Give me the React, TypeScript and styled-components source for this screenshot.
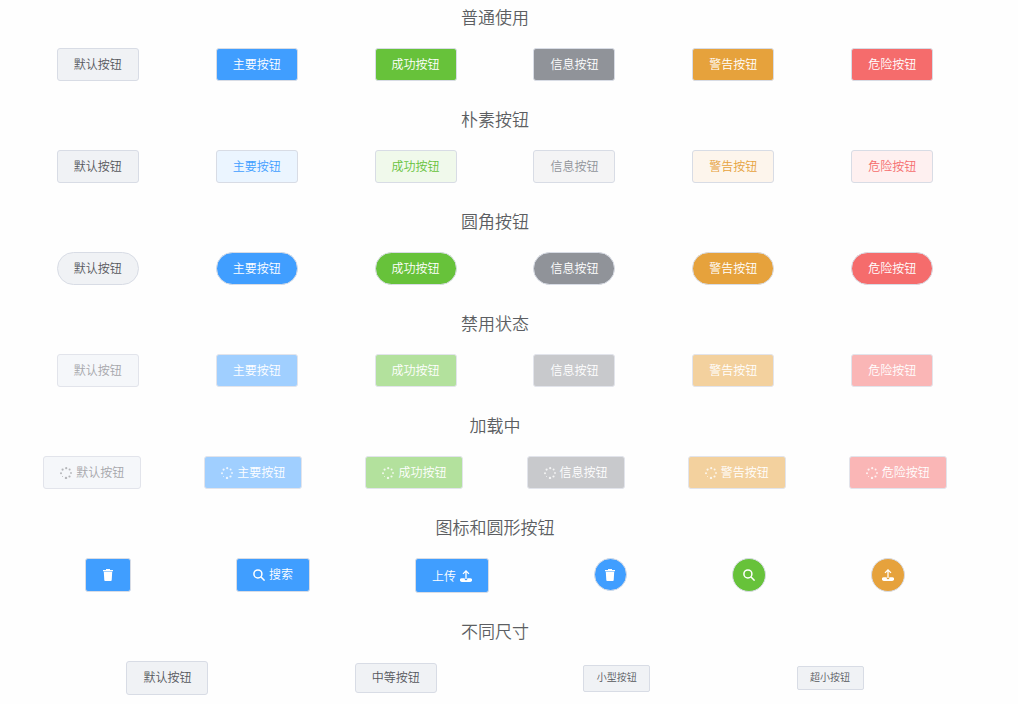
import React from 'react';
import styled, { createGlobalStyle, css } from 'styled-components';

const GlobalStyle = createGlobalStyle`
  *, *::before, *::after { box-sizing: border-box; }
  body {
    margin: 0;
    background: #fefefe;
    color: #5c5e62;
    font-family: 'Noto Sans CJK SC', sans-serif;
    font-weight: 350;
  }
`;

type Kind = 'default' | 'primary' | 'success' | 'info' | 'warning' | 'danger';
type Size = 'large' | 'tall' | 'normal' | 'medium' | 'small' | 'mini';

const solid: Record<Kind, string> = {
  default: '#f0f2f5',
  primary: '#409eff',
  success: '#67c23a',
  info: '#909399',
  warning: '#e6a23c',
  danger: '#f56c6c',
};

const pale: Record<Kind, string> = {
  default: '#f0f2f5',
  primary: '#ebf5ff',
  success: '#f0f9eb',
  info: '#f4f4f5',
  warning: '#fdf5ec',
  danger: '#fef0f0',
};

const faded: Record<Kind, string> = {
  default: '#f5f7fa',
  primary: '#a0cfff',
  success: '#b3e19d',
  info: '#c8c9cc',
  warning: '#f3d19e',
  danger: '#fab6b6',
};

const heights: Record<Size, number> = {
  large: 35,
  tall: 34,
  normal: 33,
  medium: 30,
  small: 27,
  mini: 24,
};

const Page = styled.main`
  margin: 0 8px 0 -20px;
  overflow: hidden;
`;

const Section = styled.section`
  padding-bottom: 21px;
`;

const Title = styled.h2`
  margin: 0;
  font-size: 17px;
  font-weight: inherit;
  line-height: 34px;
  text-align: center;
`;

const Row = styled.div<{ $top?: number; $height?: number; $align?: string }>`
  display: flex;
  justify-content: space-evenly;
  align-items: ${(p) => p.$align ?? 'center'};
  min-height: ${(p) => p.$height ?? 33}px;
  margin-top: ${(p) => p.$top ?? 14}px;
`;

const Button = styled.button<{
  $kind?: Kind;
  $size?: Size;
  $plain?: boolean;
  $round?: boolean;
  $circle?: boolean;
}>`
  display: inline-flex;
  align-items: center;
  justify-content: center;
  gap: 4px;
  height: ${(p) => heights[p.$size ?? 'normal']}px;
  padding: 0 16px;
  border: 1px solid #d8dce5;
  border-radius: ${(p) => (p.$round ? 17 : 3)}px;
  background: ${(p) => (p.$plain ? pale : solid)[p.$kind ?? 'default']};
  color: ${(p) => {
    const kind = p.$kind ?? 'default';
    if (kind === 'default') return '#55575c';
    return p.$plain ? solid[kind] : '#fff';
  }};
  font-family: inherit;
  font-size: 12px;
  font-weight: inherit;
  line-height: 16px;
  white-space: nowrap;
  cursor: pointer;

  ${(p) =>
    (p.$size === 'small' || p.$size === 'mini') &&
    css`
      min-width: 67px;
      padding: 0 12px;
      border-radius: 2px;
      font-size: 10px;
    `}

  ${(p) =>
    p.$circle &&
    css`
      width: ${heights[p.$size ?? 'normal']}px;
      padding: 0;
      border-radius: 50%;
    `}

  &:disabled {
    border-color: #e2e4eb;
    background: ${(p) => faded[p.$kind ?? 'default']};
    color: ${(p) => ((p.$kind ?? 'default') === 'default' ? '#a5a6aa' : '#fff')};
    cursor: not-allowed;
  }
`;

const Label = styled.span`
  padding-bottom: 2px;
`;

const Icon = styled.svg`
  display: block;
  flex: none;
  width: 12px;
  height: 12px;
`;

const Spinner = styled(Icon)`
  opacity: 0.8;
`;

const TrashIcon = () => (
  <Icon viewBox="0 0 12 12" fill="currentColor" aria-hidden="true">
    <path d="M4 0h4v1h3v1.2H1V1h3zM1.8 2.8h8.4l-.5 8.4a.9.9 0 0 1-.9.8H3.2a.9.9 0 0 1-.9-.8z" />
  </Icon>
);

const SearchIcon = () => (
  <Icon viewBox="0 0 12 12" fill="none" stroke="currentColor" strokeWidth="1.5" aria-hidden="true">
    <circle cx="4.9" cy="4.9" r="4" />
    <path d="M7.8 7.8l3.8 3.8" />
  </Icon>
);

const UploadIcon = () => (
  <Icon viewBox="0 0 12 12" aria-hidden="true">
    <path d="M6 9V1M3 3.9L6 .9l3 3" fill="none" stroke="currentColor" strokeWidth="1.3" />
    <path
      d="M1.8 8.2h2.9v.8a1.3 1.3 0 0 0 2.6 0v-.8h2.9a1.9 1.9 0 0 1 0 3.8H1.8a1.9 1.9 0 0 1 0-3.8z"
      fill="currentColor"
    />
  </Icon>
);

const LoadingIcon = () => (
  <Spinner viewBox="0 0 12 12" fill="currentColor" aria-hidden="true">
    <circle cx="6.2" cy="1.2" r="1.1" />
    <circle cx="9.6" cy="2.6" r="1" />
    <circle cx="11" cy="6" r=".9" />
    <circle cx="9.5" cy="9.5" r="1.1" />
    <circle cx="6" cy="10.9" r="1.2" />
    <circle cx="2.5" cy="9.5" r=".5" />
    <circle cx="1" cy="6.2" r="1" />
    <circle cx="2.6" cy="2.6" r="1.1" />
  </Spinner>
);

const items: { kind: Kind; label: string }[] = [
  { kind: 'default', label: '默认按钮' },
  { kind: 'primary', label: '主要按钮' },
  { kind: 'success', label: '成功按钮' },
  { kind: 'info', label: '信息按钮' },
  { kind: 'warning', label: '警告按钮' },
  { kind: 'danger', label: '危险按钮' },
];

const sizes: { size: Size; label: string }[] = [
  { size: 'tall', label: '默认按钮' },
  { size: 'medium', label: '中等按钮' },
  { size: 'small', label: '小型按钮' },
  { size: 'mini', label: '超小按钮' },
];

interface GroupProps {
  title: string;
  plain?: boolean;
  round?: boolean;
  disabled?: boolean;
  loading?: boolean;
}

const ButtonGroup = ({ title, plain, round, disabled, loading }: GroupProps) => (
  <Section>
    <Title>{title}</Title>
    <Row>
      {items.map(({ kind, label }) => (
        <Button
          key={kind}
          type="button"
          $kind={kind}
          $plain={plain}
          $round={round}
          disabled={disabled || loading}
        >
          {loading && <LoadingIcon />}
          <Label>{label}</Label>
        </Button>
      ))}
    </Row>
  </Section>
);

export default function App() {
  return (
    <>
      <GlobalStyle />
      <Page>
        <ButtonGroup title="普通使用" />
        <ButtonGroup title="朴素按钮" plain />
        <ButtonGroup title="圆角按钮" round />
        <ButtonGroup title="禁用状态" disabled />
        <ButtonGroup title="加载中" loading />
        <Section>
          <Title>图标和圆形按钮</Title>
          <Row $height={35} $align="flex-start">
            <Button type="button" $kind="primary" $size="tall" aria-label="删除">
              <TrashIcon />
            </Button>
            <Button type="button" $kind="primary" $size="tall">
              <SearchIcon />
              <Label>搜索</Label>
            </Button>
            <Button type="button" $kind="primary" $size="large">
              <span>上传</span>
              <UploadIcon />
            </Button>
            <Button type="button" $kind="primary" $circle aria-label="删除">
              <TrashIcon />
            </Button>
            <Button type="button" $kind="success" $size="tall" $circle aria-label="搜索">
              <SearchIcon />
            </Button>
            <Button type="button" $kind="warning" $size="tall" $circle aria-label="上传">
              <UploadIcon />
            </Button>
          </Row>
        </Section>
        <Section>
          <Title>不同尺寸</Title>
          <Row $top={13} $height={34}>
            {sizes.map(({ size, label }) => (
              <Button key={size} type="button" $size={size}>
                <Label>{label}</Label>
              </Button>
            ))}
          </Row>
        </Section>
      </Page>
    </>
  );
}
